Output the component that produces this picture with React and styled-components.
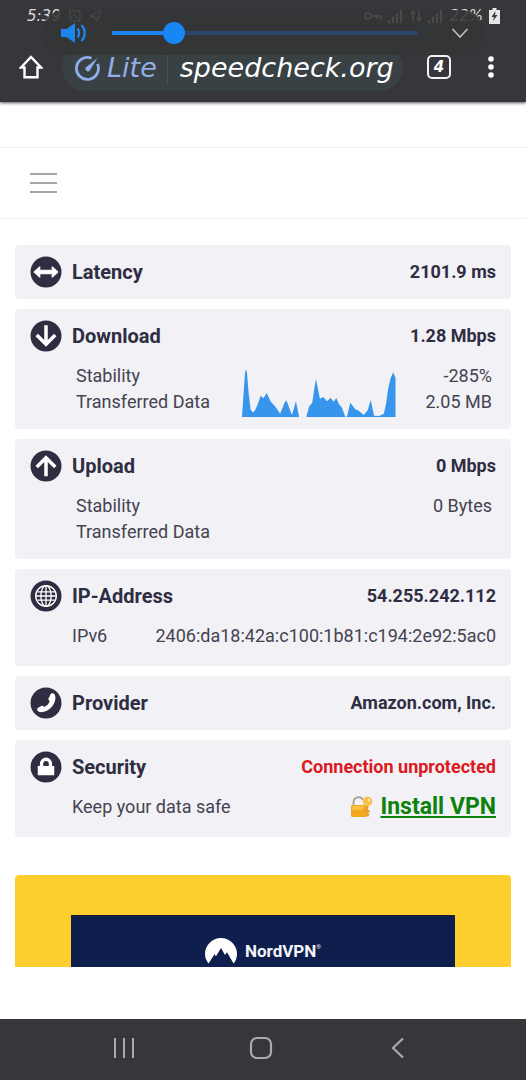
import React, { useState } from "react";
import styled, { createGlobalStyle } from "styled-components";

const ink = "#2f2d42";

const GlobalStyle = createGlobalStyle`
  *, *::before, *::after { box-sizing: border-box; }
  body { margin: 0; background: #fff; font-family: Roboto, "Liberation Sans", sans-serif; color: ${ink}; }
  button { border: 0; padding: 0; margin: 0; background: none; color: inherit; font: inherit; }
  h2, p, dl, dd, dt { margin: 0; }
  svg { display: block; }
`;

const Page = styled.div`
  min-height: 100vh;
  display: flex;
  flex-direction: column;
`;

const BrowserHeader = styled.header`
  position: relative;
  background: #37363b;
  color: #fff;
  font-family: "DejaVu Sans", "Open Sans", sans-serif;
  box-shadow: 0 1px 3px #55555c;
`;

const StatusBar = styled.div`
  height: 32px;
  padding: 0 26px 0 27px;
  display: flex;
  justify-content: space-between;
  align-items: center;
  font-size: 15px;
  font-style: italic;
  color: #dcdcde;
`;

const StatusGroup = styled.div`
  display: flex;
  align-items: center;
  gap: 6px;
`;

const AddressRow = styled.div`
  height: 70px;
  padding: 0 25px 0 19px;
  display: flex;
  align-items: center;
`;

const AddressPill = styled.div`
  flex: 1;
  min-width: 0;
  height: 46px;
  margin: 2px 24px 0 19px;
  padding: 0 4px 0 12px;
  border-radius: 23px;
  background: #394144;
  display: flex;
  align-items: center;
  font-style: italic;
`;

const LiteLabel = styled.span`
  margin-left: 6px;
  padding-right: 10px;
  border-right: 1px solid #4b5256;
  font-size: 27px;
  line-height: 32px;
  color: #93aee6;
`;

const UrlInput = styled.input`
  flex: 1;
  min-width: 0;
  border: 0;
  padding: 0 0 0 12px;
  background: none;
  color: #fff;
  font: italic 27px/36px "DejaVu Sans", "Open Sans", sans-serif;
  outline: none;
`;

const TabsButton = styled.button`
  width: 24px;
  height: 24px;
  border: 2px solid #f2f2f2;
  border-radius: 5px;
  font-size: 15px;
  font-style: italic;
  font-weight: 700;
  line-height: 18px;
`;

const MoreButton = styled.button`
  margin-left: 30px;
`;

const VolumePanel = styled.div`
  position: absolute;
  left: 42px;
  right: 42px;
  top: 10px;
  height: 45px;
  padding: 0 15px 0 18px;
  border-radius: 22px;
  background: rgba(52, 53, 54, 0.88);
  display: flex;
  align-items: center;
`;

const VolumeSlider = styled.input`
  appearance: none;
  flex: 1;
  min-width: 0;
  height: 22px;
  margin: 0 33px 0 24px;
  background: linear-gradient(90deg, #1d86ee ${(p) => p.value}%, #2c456a ${(p) => p.value}%) center / 100% 4px no-repeat;
  &::-webkit-slider-thumb {
    appearance: none;
    width: 22px;
    height: 22px;
    border-radius: 50%;
    background: #1787f5;
  }
`;

const SiteBar = styled.div`
  margin-top: 45px;
  height: 72px;
  padding: 0 30px;
  border: 1px solid #f0f0f3;
  border-width: 1px 0;
  display: flex;
  align-items: center;
`;

const MenuButton = styled.button`
  width: 27px;
  height: 20px;
  display: flex;
  flex-direction: column;
  justify-content: space-between;
  & > span { height: 2px; background: #a6a6a8; }
`;

const Results = styled.main`
  flex: 1;
  padding: 26px 15px 52px;
  display: flex;
  flex-direction: column;
  gap: 10px;
`;

const Card = styled.section`
  padding: 0 15px;
  border-radius: 4px;
  background: #f1f1f6;
`;

const CardHead = styled.div`
  height: 54px;
  display: flex;
  align-items: center;
`;

const CardTitle = styled.h2`
  margin-left: 10px;
  flex: 1;
  font-size: 20px;
  font-weight: 700;
  line-height: 24px;
`;

const CardValue = styled.p`
  font-size: 18px;
  font-weight: 700;
  line-height: 24px;
  color: ${(p) => (p.$alert ? "#dc1820" : ink)};
`;

const Metrics = styled.dl`
  padding: 0 4px 14px 46px;
  display: grid;
  grid-template-columns: 166px 1fr auto;
  grid-template-rows: 26px 26px;
  grid-auto-flow: column;
  font-size: 18px;
  line-height: 26px;
  color: #44434f;
`;

const MetricName = styled.dt`
  grid-column: 1;
  grid-row: ${(p) => p.$row};
`;

const MetricValue = styled.dd`
  grid-column: 3;
  grid-row: ${(p) => p.$row};
  text-align: right;
`;

const ChartCell = styled.dd`
  grid-column: 2;
  grid-row: 1 / 3;
  align-self: end;
  height: 48px;
  margin: 0 30px -2px 0;
  & > svg { width: 100%; height: 100%; }
`;

const DetailRow = styled.div`
  padding: 0 0 17px 42px;
  display: flex;
  justify-content: space-between;
  align-items: center;
  font-size: 18px;
  line-height: 26px;
  color: #44434f;
`;

const InstallLink = styled.a`
  display: flex;
  align-items: center;
  gap: 8px;
  color: #0c820c;
  font-size: 23px;
  font-weight: 700;
  text-decoration: none;
  & > span { text-decoration: underline; text-decoration-thickness: 2px; text-underline-offset: 2px; }
`;

const AdFrame = styled.aside`
  margin-top: 28px;
  padding: 40px 56px 0;
  border-radius: 4px 4px 0 0;
  background: #fece2f;
`;

const AdBanner = styled.a`
  height: 52px;
  padding-top: 18px;
  background: #0e1f4d;
  border-top: 1px solid #101a2c;
  display: flex;
  justify-content: center;
  align-items: center;
  gap: 8px;
  color: #f4f5fa;
  font-size: 17px;
  font-weight: 700;
  text-decoration: none;
  & sup { font-size: 6px; font-weight: 400; vertical-align: 8px; line-height: 0; }
`;

const SystemNav = styled.nav`
  height: 61px;
  padding: 0 60px 3px 56px;
  background: #37363b;
  color: #aaa9ad;
  display: flex;
  & > button { flex: 1; display: flex; align-items: center; justify-content: center; }
`;

const samples = [
  [0, 0], [4, 60], [9, 132], [12, 143], [15, 132], [20, 70], [26, 22], [32, 14], [38, 18], [47, 38], [56, 64],
  [64, 56], [74, 72], [86, 46], [99, 32], [114, 10], [127, 42], [132, 50], [137, 40], [149, 6], [155, 24],
  [161, 47], [166, 24], [171, 0], [192, 0], [201, 32], [210, 42], [216, 84], [221, 114], [226, 90], [233, 55],
  [243, 60], [254, 47], [265, 58], [274, 46], [282, 57], [290, 38], [299, 28], [309, 0], [314, 2], [324, 43],
  [338, 24], [350, 18], [364, 6], [376, 20], [385, 51], [395, 4], [410, 3], [424, 10], [430, 35], [437, 85],
  [444, 115], [452, 134], [459, 118], [459, 0],
];

const SpeedChart = () => (
  <svg viewBox="0 0 459 144" preserveAspectRatio="none" role="img" aria-label="Download speed over time">
    <polygon fill="#3795ec" points={samples.map(([x, y]) => `${x},${144 - y}`).join(" ")} />
  </svg>
);

const Badge = ({ children }) => (
  <svg width="32" height="32" viewBox="0 0 31 31" fill="none" aria-hidden="true">
    <circle cx="15.5" cy="15.5" r="15" fill={ink} />
    {children}
  </svg>
);

const icons = {
  latency: (
    <path
      fill="#fff"
      stroke="#fff"
      strokeLinejoin="round"
      d="M4 15.500 9.500 10.500v3.400h12v-3.400l5.500 5-5.500 5v-3.400h-12v3.400z"
    />
  ),
  down: <path stroke="#fff" strokeWidth="3.400" d="M15.500 5v18M6.500 14.500l9 9 9-9" />,
  up: <path stroke="#fff" strokeWidth="3.400" d="M15.500 25.500V8M6.500 16.500l9-9 9 9" />,
  globe: (
    <g stroke="#fff" strokeWidth="1.300">
      <circle cx="15.500" cy="15.500" r="10" />
      <ellipse cx="15.500" cy="15.500" rx="5" ry="10" />
      <path d="M15.500 5.500v20M5.500 15.500h20M7 11.500h17M7 19.500h17" />
    </g>
  ),
  phone: (
    <path
      fill="#fff"
      d="M20.200 6.500c1.500-.8 3.300-.3 4 1.400 1.300 3.600-.5 8.700-3.900 12.200-3.400 3.400-8.200 5-11.700 3.900-1.700-.6-2.100-2.300-1.200-3.600l3.600-1.900c1-.5 2-.1 2.500.9 1.400-.4 2.600-1.100 3.600-2.100 1.100-1.200 1.800-2.500 2-3.900-1.100-.4-1.600-1.500-1.100-2.600z"
    />
  ),
  lock: (
    <>
      <path fill="#fff" d="M7.500 14.500h16v9h-16z" />
      <path stroke="#fff" strokeWidth="3.200" d="M11.200 15v-2.500a4.300 4.500 0 0 1 8.600 0V15" />
    </>
  ),
};

const LockWithKey = () => (
  <svg width="23" height="24" viewBox="0 0 23 24" fill="none" aria-hidden="true">
    <path stroke="#a3a19a" strokeWidth="1.800" d="M3.500 11V7a5 5 0 0 1 9.500-2" />
    <path stroke="#dda02e" strokeWidth="2.800" d="m17.500 9-2 12.500M16.500 16l3 .6M16 19.500l3 .6" />
    <rect x="1" y="10" width="15" height="12" rx="1.500" fill="#f3a81c" />
    <path fill="#f9c243" d="M2.500 11h12l-3 4h-9z" />
    <circle cx="17.500" cy="6.500" r="4.800" fill="#f6c24c" />
    <circle cx="19" cy="5" r="1.200" fill="#fff0c4" />
  </svg>
);

const Signal = () => (
  <svg width="16" height="14" viewBox="0 0 16 14" fill="currentColor" aria-hidden="true">
    <path d="M0 11h2v3H0zM4 8h2v6H4zM8 5h2v9H8zM12 1h2v13h-2z" />
  </svg>
);

const ResultCard = ({ icon, title, value, alert, children }) => (
  <Card>
    <CardHead>
      <Badge>{icons[icon]}</Badge>
      <CardTitle>{title}</CardTitle>
      <CardValue $alert={alert}>{value}</CardValue>
    </CardHead>
    {children}
  </Card>
);

export default function App() {
  const [volume, setVolume] = useState(18);
  const [url, setUrl] = useState("speedcheck.org");

  return (
    <Page>
      <GlobalStyle />
      <BrowserHeader>
        <StatusBar>
          <StatusGroup>
            <span>5:39</span>
            <svg width="36" height="14" viewBox="0 0 36 14" fill="none" stroke="currentColor" aria-hidden="true">
              <path d="M3 2h10v10H3zM3 9l4-3 6 5M23 7l11-5-4 10-3-4z" />
            </svg>
          </StatusGroup>
          <StatusGroup>
            <svg width="18" height="12" viewBox="0 0 18 12" fill="none" stroke="currentColor" strokeWidth="1.500" aria-hidden="true">
              <circle cx="4" cy="6" r="3" />
              <path d="M7 6h10v4M13 6v3" />
            </svg>
            <Signal />
            <svg width="12" height="14" viewBox="0 0 12 14" fill="none" stroke="currentColor" strokeWidth="1.500" aria-hidden="true">
              <path d="M3 13V3M1 5l2-3 2 3M9 1v10M7 9l2 3 2-3" />
            </svg>
            <Signal />
            <span>22%</span>
            <svg width="11" height="16" viewBox="0 0 11 16" aria-hidden="true">
              <path fill="#e6e6e6" d="M3.500 0h4v2H11v14H0V2h3.500z" />
              <path fill="#37363b" d="M6.500 3 2.500 9H5l-1 4 4.500-6H6z" />
            </svg>
          </StatusGroup>
        </StatusBar>
        <AddressRow>
          <button aria-label="Home">
            <svg width="24" height="24" viewBox="0 0 24 24" fill="none" stroke="#fff" strokeWidth="2.400" aria-hidden="true">
              <path d="M2 12.500 12 2l10 10.500h-3.500v9.800h-13v-9.800z" />
            </svg>
          </button>
          <AddressPill>
            <svg width="27" height="27" viewBox="0 0 27 27" fill="none" stroke="#8eaee8" strokeWidth="2.800" aria-hidden="true">
              <path d="M17.500 3.200A11 11 0 1 0 23.500 9" />
              <path fill="#8eaee8" stroke="none" d="M23.500 3 15.800 15.500a2.400 2.400 0 0 1-3.800-3.200z" />
            </svg>
            <LiteLabel>Lite</LiteLabel>
            <UrlInput aria-label="Address" value={url} onChange={(e) => setUrl(e.target.value)} />
          </AddressPill>
          <TabsButton aria-label="Open tabs: 4">4</TabsButton>
          <MoreButton aria-label="More options">
            <svg width="20" height="24" viewBox="0 0 20 24" fill="#fff" aria-hidden="true">
              <circle cx="10" cy="4" r="2.800" />
              <circle cx="10" cy="12" r="2.800" />
              <circle cx="10" cy="20" r="2.800" />
            </svg>
          </MoreButton>
        </AddressRow>
        <VolumePanel>
          <svg width="28" height="22" viewBox="0 0 28 22" fill="none" aria-hidden="true">
            <path fill="#1d86ee" d="M1 7h5.500L15 1v20l-8.500-6H1z" />
            <path stroke="#1d86ee" strokeWidth="2.200" d="M17.500 6.500c2.200 2.500 2.200 6.500 0 9M21.500 3c4.200 4.500 4.200 11.500 0 16" />
          </svg>
          <VolumeSlider type="range" aria-label="Media volume" value={volume} onChange={(e) => setVolume(Number(e.target.value))} />
          <button aria-label="Expand volume panel">
            <svg width="18" height="12" viewBox="0 0 18 12" fill="none" stroke="#b9b9bb" strokeWidth="1.800" aria-hidden="true">
              <path d="m1.500 2 7.500 8 7.500-8" />
            </svg>
          </button>
        </VolumePanel>
      </BrowserHeader>

      <SiteBar>
        <MenuButton aria-label="Menu">
          <span />
          <span />
          <span />
        </MenuButton>
      </SiteBar>

      <Results>
        <ResultCard icon="latency" title="Latency" value="2101.9 ms" />
        <ResultCard icon="down" title="Download" value="1.28 Mbps">
          <Metrics>
            <MetricName $row={1}>Stability</MetricName>
            <MetricValue $row={1}>-285%</MetricValue>
            <ChartCell><SpeedChart /></ChartCell>
            <MetricName $row={2}>Transferred Data</MetricName>
            <MetricValue $row={2}>2.05 MB</MetricValue>
          </Metrics>
        </ResultCard>
        <ResultCard icon="up" title="Upload" value="0 Mbps">
          <Metrics>
            <MetricName $row={1}>Stability</MetricName>
            <MetricValue $row={1}>0 Bytes</MetricValue>
            <MetricName $row={2}>Transferred Data</MetricName>
          </Metrics>
        </ResultCard>
        <ResultCard icon="globe" title="IP-Address" value="54.255.242.112">
          <DetailRow>
            <span>IPv6</span>
            <span>2406:da18:42a:c100:1b81:c194:2e92:5ac0</span>
          </DetailRow>
        </ResultCard>
        <ResultCard icon="phone" title="Provider" value="Amazon.com, Inc." />
        <ResultCard icon="lock" title="Security" value="Connection unprotected" alert>
          <DetailRow>
            <span>Keep your data safe</span>
            <InstallLink href="#install">
              <LockWithKey />
              <span>Install VPN</span>
            </InstallLink>
          </DetailRow>
        </ResultCard>

        <AdFrame>
          <AdBanner href="#nordvpn">
            <svg width="32" height="26" viewBox="0 0 32 26" aria-hidden="true">
              <path fill="#fff" d="M3.500 25.500A16 16 0 0 1 0 16a16 16 0 0 1 32 0c0 3.500-1.200 7-3.500 9.500L22 14.200l-2 2.800-4-7-5 8.300-1.500-2z" />
            </svg>
            <span>NordVPN<sup>®</sup></span>
          </AdBanner>
        </AdFrame>
      </Results>

      <SystemNav aria-label="System navigation">
        <button aria-label="Recent apps">
          <svg width="22" height="22" viewBox="0 0 22 22" stroke="currentColor" strokeWidth="2" aria-hidden="true">
            <path d="M2 1v20M11 1v20M20 1v20" />
          </svg>
        </button>
        <button aria-label="Home screen">
          <svg width="24" height="24" viewBox="0 0 24 24" fill="none" stroke="currentColor" strokeWidth="2.200" aria-hidden="true">
            <rect x="2" y="2" width="20" height="20" rx="6" />
          </svg>
        </button>
        <button aria-label="Back">
          <svg width="14" height="22" viewBox="0 0 14 22" fill="none" stroke="currentColor" strokeWidth="2.200" aria-hidden="true">
            <path d="M12 1.500 2 11l10 9.500" />
          </svg>
        </button>
      </SystemNav>
    </Page>
  );
}
